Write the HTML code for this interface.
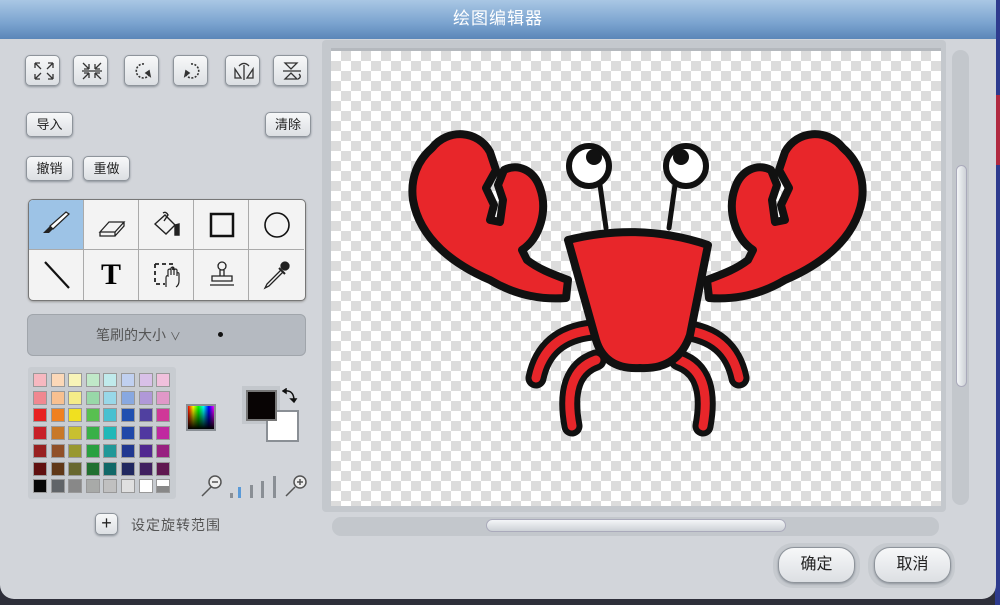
<!DOCTYPE html>
<html><head><meta charset="utf-8">
<style>
*{margin:0;padding:0;box-sizing:border-box}
body{width:1000px;height:605px;overflow:hidden;background:#2e2f3a;font-family:"Liberation Sans","Noto Sans CJK SC",sans-serif;position:relative}
.dlg{position:absolute;left:0;top:0;width:996px;height:599px;background:#d2d5da;border-radius:0 0 14px 14px;overflow:hidden}
.title{position:absolute;left:0;top:0;width:996px;height:39px;background:linear-gradient(#a9c7e4,#7aa3cf 60%,#5b86b8);color:#fff;font-size:17px;text-align:center;line-height:37px;letter-spacing:1px}
.btn{position:absolute;background:linear-gradient(#f7f8f9,#dcdfe3);border:1px solid #8e949b;border-radius:5px;box-shadow:0 1px 2px #8a9098;font-size:13px;color:#222;text-align:center}
.ib{width:35px;height:31px;top:55px}
.ib svg{position:absolute;left:7px;top:5px}
.grid{position:absolute;left:28px;top:199px;width:278px;height:102px;border:1px solid #777;border-radius:5px;background:#f3f3f3;overflow:hidden;box-shadow:0 1px 2px #999}
.cell{position:absolute;width:55px;height:50px;border-right:1px solid #aaa;border-bottom:1px solid #aaa}
.cell svg{position:absolute;left:12px;top:10px}
.sw{position:absolute;width:14px;height:14px;border:1px solid #999}
</style></head><body>
<div style="position:absolute;left:995px;top:0;width:5px;height:605px;background:#2e3b8e"></div>
<div style="position:absolute;left:995px;top:95px;width:5px;height:70px;background:#b02a40"></div>
<div class="dlg">
<div class="title">绘图编辑器</div>

<div class="btn ib" style="left:25px"><svg width="22" height="20" viewBox="0 0 22 20" fill="none" stroke="#333" stroke-width="1.3"><path d="M2 2h5M2 2v5M2 2l6 6M20 2h-5M20 2v5M20 2l-6 6M2 18h5M2 18v-5M2 18l6-6M20 18h-5M20 18v-5M20 18l-6-6"/></svg></div>
<div class="btn ib" style="left:73px"><svg width="22" height="20" viewBox="0 0 22 20" fill="none" stroke="#333" stroke-width="1.3"><path d="M8 8H3M8 8V3M8 8L2 2M14 8h5M14 8V3M14 8l6-6M8 12H3M8 12v5M8 12l-6 6M14 12h5M14 12v5M14 12l6 6M1 10h20"/></svg></div>
<div class="btn ib" style="left:124px"><svg width="22" height="20" viewBox="0 0 22 20" fill="none" stroke="#333" stroke-width="1.6"><path d="M12 3A7 7 0 1 0 17 14" stroke-dasharray="2 1.5"/><path d="M14 12l4 3-1-5z" fill="#333"/></svg></div>
<div class="btn ib" style="left:173px"><svg width="22" height="20" viewBox="0 0 22 20" fill="none" stroke="#333" stroke-width="1.6"><path d="M10 3A7 7 0 1 1 5 14" stroke-dasharray="2 1.5"/><path d="M8 12l-4 3 1-5z" fill="#333"/></svg></div>
<div class="btn ib" style="left:225px"><svg width="22" height="20" viewBox="0 0 22 20" fill="none" stroke="#333" stroke-width="1.3"><path d="M2 8v9h6zM20 8v9h-6zM11 4v15" /><path d="M6 5q5-5 10 0" /></svg></div>
<div class="btn ib" style="left:273px"><svg width="22" height="20" viewBox="0 0 22 20" fill="none" stroke="#333" stroke-width="1.3"><path d="M4 2h12l-6 6zM4 18h12l-6-6zM2 10h18"/><path d="M18 13q3 3-1 5"/></svg></div>

<div class="btn" style="left:26px;top:112px;width:47px;height:25px;line-height:23px">导入</div>
<div class="btn" style="left:265px;top:112px;width:46px;height:25px;line-height:23px">清除</div>
<div class="btn" style="left:26px;top:156px;width:47px;height:25px;line-height:23px">撤销</div>
<div class="btn" style="left:83px;top:156px;width:47px;height:25px;line-height:23px">重做</div>

<div class="grid">
<div class="cell" style="left:0;top:0;background:#9dc3e6"><svg width="32" height="30" viewBox="0 0 32 30"><path d="M28 4L12 19l-3-3L25 2z" fill="#fff" stroke="#222" stroke-width="1.2"/><path d="M9 16l3 3-4 4H2z" fill="#222"/></svg></div>
<div class="cell" style="left:55px;top:0"><svg width="32" height="30" viewBox="0 0 32 30" fill="none" stroke="#222" stroke-width="1.3"><path d="M4 22l9-10h15l-9 10zM4 22v4h15v-4M19 26l9-10v-4"/></svg></div>
<div class="cell" style="left:110px;top:0"><svg width="32" height="30" viewBox="0 0 32 30" fill="none" stroke="#222" stroke-width="1.4"><path d="M4 14l10-9 10 10-9 9z"/><path d="M12 3q3-2 5 2l-4 6"/><path d="M24 15v10h4V14z" fill="#222"/></svg></div>
<div class="cell" style="left:165px;top:0"><svg width="32" height="30"><rect x="5" y="4" width="22" height="22" fill="none" stroke="#111" stroke-width="2.5"/></svg></div>
<div class="cell" style="left:220px;top:0;border-right:0"><svg width="32" height="30"><circle cx="16" cy="15" r="12" fill="none" stroke="#111" stroke-width="1.6"/></svg></div>
<div class="cell" style="left:0;top:50px;border-bottom:0"><svg width="32" height="30"><path d="M4 2l24 26" stroke="#111" stroke-width="2.2"/></svg></div>
<div class="cell" style="left:55px;top:50px;border-bottom:0;font:bold 30px 'Liberation Serif',serif;text-align:center;line-height:50px">T</div>
<div class="cell" style="left:110px;top:50px;border-bottom:0"><svg width="32" height="30" viewBox="0 0 32 30" fill="none" stroke="#222" stroke-width="1.8"><path d="M4 4h18v6M4 4v20h10" stroke-dasharray="4 3"/><path d="M15 27v-9q0-3 2-2v-6q2-2 3 0v5-7q2-2 3 0v7-5q2-2 3 0v6-3q2-1 2 1v7q0 4-3 6" stroke-width="1.2"/></svg></div>
<div class="cell" style="left:165px;top:50px;border-bottom:0"><svg width="32" height="30" viewBox="0 0 32 30" fill="none" stroke="#222" stroke-width="1.3"><circle cx="16" cy="6" r="4"/><path d="M14 10v6h4v-6M6 16h20v5H6zM4 25h24"/></svg></div>
<div class="cell" style="left:220px;top:50px;border:0"><svg width="32" height="30" viewBox="0 0 32 30" fill="none" stroke="#222" stroke-width="1.3"><path d="M20 10L6 24l-2 4 4-2 14-14"/><circle cx="24" cy="6" r="4" fill="#222"/><path d="M18 8l6 6" stroke-width="2"/></svg></div>
</div>

<div style="position:absolute;left:27px;top:314px;width:279px;height:42px;background:#b5bac1;border-radius:6px;border:1px solid #a0a5ab"></div>
<div style="position:absolute;left:96px;top:325px;font-size:14px;color:#555">笔刷的大小 <span style="font-size:11px">∨</span></div>
<div style="position:absolute;left:218px;top:332px;width:5px;height:5px;border-radius:50%;background:#111"></div>

<div style="position:absolute;left:28px;top:367px;width:148px;height:132px;background:#c8ccd1;border-radius:3px"></div>
<div id="pal"></div>
<div style="position:absolute;left:186px;top:404px;width:30px;height:27px;border:2px solid #8a8f95;background:linear-gradient(transparent,#000),linear-gradient(90deg,#f00,#ff0,#0f0,#0ff,#00f,#f0f)"></div>
<div style="position:absolute;left:242px;top:386px;width:38px;height:38px;background:#c3c7cc"></div>
<div style="position:absolute;left:266px;top:410px;width:33px;height:32px;background:#fff;border:2px solid #8a8f95"></div>
<div style="position:absolute;left:246px;top:390px;width:31px;height:31px;background:#080404;border:2px solid #777"></div>
<svg style="position:absolute;left:282px;top:388px" width="16" height="16" viewBox="0 0 16 16" fill="none" stroke="#111" stroke-width="1.5"><path d="M3 3q8-1 9 8"/><path d="M1 3l3-2v4zM12 14l-3-3h5z" fill="#111"/></svg>

<svg style="position:absolute;left:198px;top:472px" width="112" height="28" viewBox="0 0 112 28"><g fill="none" stroke="#555" stroke-width="1.5"><circle cx="17" cy="10" r="6" fill="#eee"/><path d="M13 15l-9 9"/><path d="M14 10h6"/><circle cx="102" cy="10" r="6" fill="#eee"/><path d="M97 15l-9 9"/><path d="M99 10h6M102 7v6"/></g><rect x="32" y="21" width="3" height="5" fill="#8a8f95"/><rect x="40" y="15" width="3" height="11" fill="#5a9ad8"/><rect x="52" y="13" width="3" height="13" fill="#8a8f95"/><rect x="63" y="9" width="3" height="17" fill="#8a8f95"/><rect x="75" y="4" width="3" height="22" fill="#8a8f95"/></svg>

<div class="btn" style="left:95px;top:513px;width:23px;height:22px;line-height:19px;font-size:18px">+</div>
<div style="position:absolute;left:131px;top:515px;font-size:14px;color:#555;letter-spacing:1px">设定旋转范围</div>

<div style="position:absolute;left:322px;top:40px;width:624px;height:472px;background:#c4c8cd;border-radius:4px"></div>
<div style="position:absolute;left:331px;top:48px;width:610px;height:458px;background-color:#fff;background-image:linear-gradient(45deg,#dcdcdc 25%,transparent 25%,transparent 75%,#dcdcdc 75%),linear-gradient(45deg,#dcdcdc 25%,transparent 25%,transparent 75%,#dcdcdc 75%);background-size:20px 20px;background-position:0 0,10px 10px;border-top:3px solid #b4b8bd"></div>
<svg style="position:absolute;left:0;top:0" width="1000" height="605">
<g stroke-linejoin="round" stroke-linecap="round">
<g id="half">
<path d="M432,148 C448,128 478,130 490,152 L496,170 L486,188 L494,205 L490,220 L500,222 L503,200 L498,185 L504,170 C518,163 534,170 540,188 C548,210 540,238 522,250 L527,260 C540,270 555,275 568,280 L566,298 C540,300 515,295 490,280 C455,265 420,240 413,200 C410,178 418,160 432,148 Z" fill="#e8262a" stroke="#111" stroke-width="8"/>
<path d="M592,330 Q545,335 536,378" fill="none" stroke="#111" stroke-width="21"/>
<path d="M592,330 Q545,335 536,378" fill="none" stroke="#e8262a" stroke-width="9"/>
<path d="M596,360 Q562,372 572,426" fill="none" stroke="#111" stroke-width="21"/>
<path d="M596,360 Q562,372 572,426" fill="none" stroke="#e8262a" stroke-width="9"/>
<path d="M600,185 L606,228" stroke="#111" stroke-width="5"/>
<circle cx="589" cy="166" r="20" fill="#fff" stroke="#111" stroke-width="6"/>
<circle cx="594" cy="157" r="8" fill="#111"/>
</g>
<use href="#half" transform="translate(1275,0) scale(-1,1)"/>
<path d="M568,240 Q640,222 708,245 L690,335 Q678,370 640,368 Q605,370 596,340 Z" fill="#e8262a" stroke="#111" stroke-width="8"/>
</g>
</svg>

<div style="position:absolute;left:952px;top:50px;width:17px;height:455px;background:#c3c7cc;border-radius:9px"></div>
<div style="position:absolute;left:956px;top:165px;width:11px;height:222px;background:linear-gradient(90deg,#f4f6f8,#cdd1d6);border-radius:6px;border:1px solid #aab"></div>
<div style="position:absolute;left:332px;top:517px;width:607px;height:19px;background:#c3c7cc;border-radius:9px"></div>
<div style="position:absolute;left:486px;top:519px;width:300px;height:13px;background:linear-gradient(#f4f6f8,#cdd1d6);border-radius:7px;border:1px solid #aab"></div>

<div style="position:absolute;left:773px;top:543px;width:87px;height:45px;background:#c6cacf;border-radius:20px"></div>
<div style="position:absolute;left:868px;top:543px;width:87px;height:45px;background:#c6cacf;border-radius:20px"></div>
<div class="btn" style="left:778px;top:547px;width:77px;height:36px;line-height:34px;border-radius:16px;font-size:16px">确定</div>
<div class="btn" style="left:874px;top:547px;width:77px;height:36px;line-height:34px;border-radius:16px;font-size:16px">取消</div>
</div>
<script>
var c=[["#f6b8c0","#fbd8b8","#f8f4b8","#c0e8c8","#c0eaec","#c0d0f0","#d8c0e8","#f0c0dc"],
["#f08890","#f8c090","#f4ec88","#98d8a8","#98d8e8","#88a8e0","#b098d8","#e098c8"],
["#e82020","#f08020","#f0e020","#58c050","#48c0d0","#2050b0","#5040a0","#d03898"],
["#c82028","#c87828","#c8c030","#38b048","#20b8b8","#2048a8","#5038a0","#c028a0"],
["#982020","#905028","#989830","#28a040","#209898","#203890","#502890","#982080"],
["#601010","#603818","#686830","#207030","#106868","#202860","#402060","#601850"],
["#080808","#606468","#888888","#a8aaa8","#c0c0c0","#e0e0e0","#ffffff","ck"]];
var h="";for(var r=0;r<7;r++)for(var k=0;k<8;k++){var v=c[r][k];var bg=v=="ck"?"background:linear-gradient(#fff 50%,#888 50%);":"background:"+v+";";
h+='<div class="sw" style="left:'+(33+k*17.6).toFixed(1)+'px;top:'+(373+r*17.7).toFixed(1)+'px;'+bg+'"></div>';}
document.getElementById("pal").innerHTML=h;
</script>
</body></html>
